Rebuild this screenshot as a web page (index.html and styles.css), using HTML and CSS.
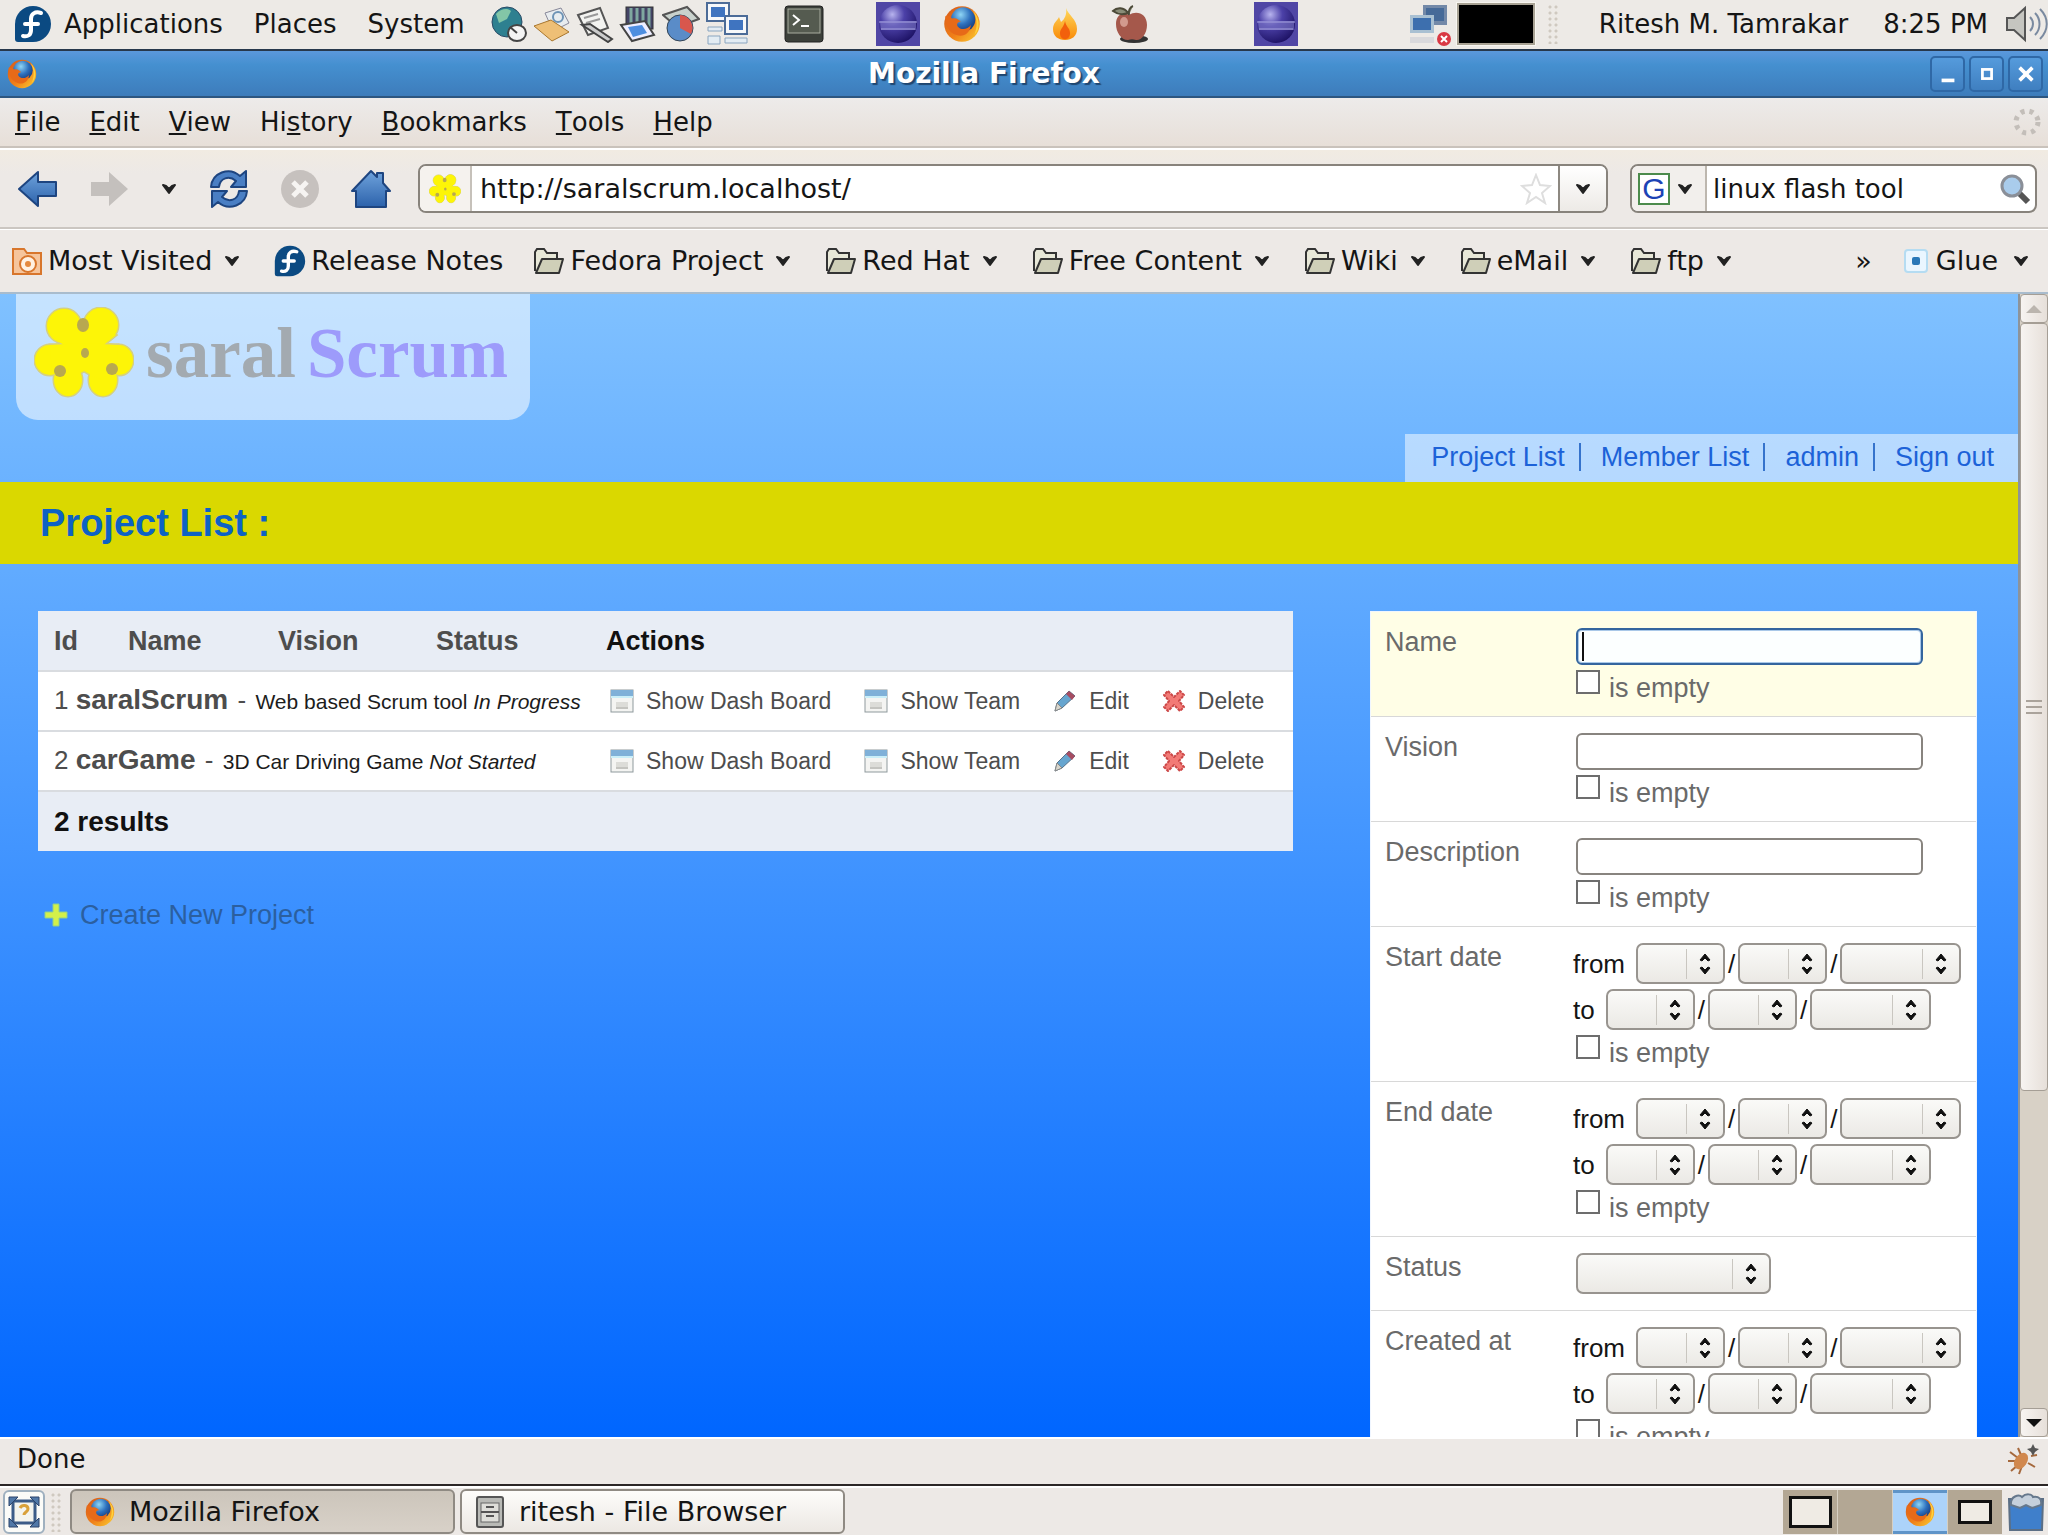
FILE: index.html
```
<!DOCTYPE html>
<html lang="en">
<head>
<meta charset="utf-8">
<title>Mozilla Firefox</title>
<link rel="stylesheet" href="styles.css">
</head>
<body>
<svg class="defs" aria-hidden="true">
  <defs>
    <linearGradient id="g-blue" x1="0" y1="0" x2="0" y2="1"><stop offset="0" stop-color="#6fa3dc"/><stop offset="1" stop-color="#2c62ab"/></linearGradient>
    <radialGradient id="g-globe" cx=".4" cy=".3" r=".8"><stop offset="0" stop-color="#8fd6f5"/><stop offset=".5" stop-color="#2d70bd"/><stop offset="1" stop-color="#12306d"/></radialGradient>
    <linearGradient id="g-fox" x1="0" y1="0" x2="1" y2="1"><stop offset="0" stop-color="#d5581a"/><stop offset=".55" stop-color="#f08019"/><stop offset="1" stop-color="#fbd032"/></linearGradient>
    <radialGradient id="g-ecl" cx=".35" cy=".25" r=".8"><stop offset="0" stop-color="#b7b3ee"/><stop offset=".4" stop-color="#4c41a8"/><stop offset="1" stop-color="#1c1163"/></radialGradient>
    <linearGradient id="g-flame" x1="0" y1="0" x2="0" y2="1"><stop offset="0" stop-color="#ffd95c"/><stop offset="1" stop-color="#f98a08"/></linearGradient>
    <g id="petals"><ellipse cx="30" cy="19" rx="17" ry="17"/><ellipse cx="67" cy="18" rx="17" ry="17"/><path d="M17 29l17-15h30l18 14-16 13-16 6-16-6z"/><ellipse cx="16" cy="53" rx="15" ry="15"/><ellipse cx="85" cy="53" rx="14" ry="15"/><ellipse cx="34" cy="73" rx="14" ry="16"/><ellipse cx="69" cy="73" rx="14" ry="16"/><path d="M16 38l34-2 34 2-2 28-18 6-14-8-14 8-18-6z"/></g>
    <symbol id="i-fedora" viewBox="0 0 38 38"><path d="M19 1a18 18 0 1 1 0 36H4a3 3 0 0 1-3-3V19A18 18 0 0 1 19 1z" fill="#0b4a82"/><path d="M27 8c-6-2-10 1-10 6v11c0 5-3 7-8 6M11 19h13" fill="none" stroke="#fff" stroke-width="4" stroke-linecap="round"/></symbol>
    <symbol id="i-firefox" viewBox="0 0 36 36"><circle cx="18" cy="18" r="16" fill="url(#g-fox)"/><circle cx="19" cy="14" r="11" fill="url(#g-globe)"/><path d="M3 11c2-1 4 0 6 2 4-1 6 1 8 3-3 0-4 2-3 4 3 4 9 3 12-1-1 8-7 11-13 9C6 26 3 19 3 11z" fill="#e76a18"/><path d="M28 6c6 6 7 16 1 22 3-7 3-14-1-22z" fill="#ffd23c"/></symbol>
    <symbol id="i-eclipse" viewBox="0 0 44 44"><rect width="44" height="44" fill="#5046a5"/><circle cx="22" cy="22" r="19" fill="url(#g-ecl)"/><path d="M4 19h36v9H5z" fill="#7d78c8" opacity=".6"/><path d="M3 20h38M5 27h34" stroke="#a5a1de" stroke-width="1"/></symbol>
    <symbol id="i-chev" viewBox="0 0 18 12"><path d="M3 2l6 8 6-8-3 1-3 3-3-3z" fill="#222" stroke="#222" stroke-width="2" stroke-linejoin="round"/></symbol>
    <symbol id="i-folder" viewBox="0 0 32 28"><path d="M2 24V5l2-3h7l3 4h10v5" fill="#e8e8d8" stroke="#333" stroke-width="2"/><path d="M3 26l6-14h21l-4 14z" fill="#cfcfb8" stroke="#333" stroke-width="2" stroke-linejoin="round"/></symbol>
    <symbol id="i-updown" viewBox="0 0 14 24"><path d="M2 8l5-6 5 6-2 1-3-3-3 3zM2 16l5 6 5-6-2-1-3 3-3-3z" fill="#111" stroke="#111" stroke-width="1"/></symbol>
    <symbol id="i-list" viewBox="0 0 24 24"><rect x="1" y="1" width="22" height="22" fill="#f4f4f2" stroke="#8f9a9d"/><rect x="1" y="1" width="22" height="6" fill="#7fb0d8"/><path d="M1 8h22" stroke="#c9eef8" stroke-width="2"/><path d="M6 13h12v6H6z" fill="#dcdcd8"/><path d="M6 19h12" stroke="#c4c4c0" stroke-width="2"/></symbol>
    <symbol id="i-pencil" viewBox="0 0 24 24"><path d="M2 22l2-8L16 2l6 5L9 19z" fill="#66a5cf" stroke="#57738a"/><path d="M16 2l6 5-3 4-6-6z" fill="#a64d62"/><path d="M2 22l2-8 5 5z" fill="#d8d6cc" stroke="#888"/></symbol>
    <symbol id="i-x" viewBox="0 0 24 24"><path d="M6 2l6 6 6-6 4 4-5 6 5 6-4 4-6-6-6 6-4-4 5-6-5-6z" fill="#f27a76" stroke="#cc4848" stroke-width="2" stroke-linejoin="round" stroke-dasharray="3 1"/></symbol>
    <symbol id="i-flower" viewBox="0 0 100 92"><use href="#petals" fill="#d5d080" stroke="#d5d080" stroke-width="3"/><use href="#petals" fill="#fdf507"/><g fill="#b8a850"><ellipse cx="49" cy="18" rx="6" ry="7"/><ellipse cx="51" cy="46" rx="4" ry="5"/><ellipse cx="26" cy="64" rx="6" ry="6"/><ellipse cx="78" cy="62" rx="6" ry="6"/></g></symbol>
  </defs>
</svg>

<header class="panel">
  <nav class="panel-menus">
    <svg class="ic38"><use href="#i-fedora"/></svg>
    <button>Applications</button><button>Places</button><button>System</button>
  </nav>
  <div class="launchers">
    <svg class="ic38" viewBox="0 0 38 38"><circle cx="17" cy="17" r="15" fill="#2e8090" stroke="#2b4a66"/><path d="M6 9c5-6 12-6 15-3l-4 8-8 4z" fill="#83c6a7"/><ellipse cx="27" cy="28" rx="9" ry="8" fill="#f4f4f4" stroke="#444" stroke-width="2"/><path d="M20 22l7 6" stroke="#444" stroke-width="2"/></svg>
    <svg class="ic38" viewBox="0 0 38 38"><path d="M12 8l16-5 8 15-16 8z" fill="#e8ecef" stroke="#889"/><circle cx="25" cy="12" r="5" fill="none" stroke="#6e93b5" stroke-width="2"/><path d="M1 21l17-6 18 12-17 9z" fill="#eebf76" stroke="#a9772e"/></svg>
    <svg class="ic38" viewBox="0 0 38 38"><path d="M2 10l22-7 8 20-20 7z" fill="#f3f3f0" stroke="#555" stroke-width="2"/><path d="M8 13l14-4M10 18l14-4" stroke="#999" stroke-width="2"/><path d="M6 20l8-1 22 15-4 3z" fill="#ccc" stroke="#444" stroke-width="2"/></svg>
    <svg class="ic38" viewBox="0 0 38 38"><rect x="7" y="2" width="27" height="22" fill="#446" stroke="#333"/><path d="M12 3v20M18 3v20M24 3v20M30 3v20" stroke="#7fa8a0" stroke-width="3"/><path d="M2 20l24-4 9 14-22 6z" fill="#eef" stroke="#444" stroke-width="2"/><path d="M9 22l14-2 5 8-14 4z" fill="#4e8ee0"/></svg>
    <svg class="ic38" viewBox="0 0 38 38"><path d="M1 10l24-8 12 12-22 8z" fill="#c9d2cd" stroke="#555" stroke-width="2"/><circle cx="18" cy="23" r="13" fill="#5a8cc8" stroke="#345"/><path d="M18 23V10a13 13 0 0 1 11 19z" fill="#d8574d"/></svg>
    <svg class="ic44" viewBox="0 0 44 44"><g fill="#f6f8fa" stroke="#4c6c98" stroke-width="2"><rect x="2" y="1" width="22" height="18"/><rect x="20" y="14" width="22" height="18"/></g><path d="M6 5h14v10H6zM24 18h14v10H24z" fill="#3f74c0"/><path d="M3 25h14v4H3zM20 36h22v5H20zM3 34h12v8H3z" fill="#e3ecf3" stroke="#8aa5bf"/></svg>
  </div>
  <div class="launchers apps">
    <svg class="ic40" viewBox="0 0 40 40"><rect x="1" y="2" width="38" height="36" rx="3" fill="#3c403a" stroke="#222"/><rect x="4" y="5" width="32" height="24" fill="#555b50" stroke="#a9ad9f"/><path d="M9 11l6 5-6 5M17 22h8" fill="none" stroke="#fff" stroke-width="2"/></svg>
    <svg class="ic44"><use href="#i-eclipse"/></svg>
    <svg class="ic40"><use href="#i-firefox"/></svg>
    <svg class="ic30 flame" viewBox="0 0 30 34"><path d="M16 1c2 7 11 11 11 21 0 7-5 11-12 11S3 29 3 22c0-6 4-8 6-12l2 5c4-3 6-8 5-14z" fill="url(#g-flame)"/><path d="M15 14c1 6 5 7 5 12 0 4-2 6-5 6s-5-2-5-6c0-4 4-6 5-12z" fill="#f2600c"/></svg>
    <svg class="ic40 apple" viewBox="0 0 40 40"><ellipse cx="24" cy="35" rx="14" ry="4" fill="#333"/><path d="M19 11c8-5 18-1 18 10 0 9-6 16-11 15-3-1-5-1-8 0C11 36 6 28 6 20c0-9 7-13 13-9z" fill="#a5584b"/><path d="M19 11c-1-4 1-8 4-9M18 9C14 3 7 3 3 7c4 3 10 4 15 2z" stroke="#4c4a38" stroke-width="2" fill="#8a8d78"/><ellipse cx="14" cy="18" rx="4" ry="5" fill="#d29a8e"/></svg>
    <svg class="ic44 eclipse2"><use href="#i-eclipse"/></svg>
  </div>
  <div class="tray">
    <svg class="ic44" viewBox="0 0 44 44"><path d="M16 3h24v20H16z" fill="#7389a8"/><path d="M19 6h18v13H19z" fill="#466a98"/><path d="M3 13h24v18H3z" fill="#a9c0d2"/><path d="M6 16h18v12H6z" fill="#3d6fae"/><path d="M3 35h24v6H3z" fill="#d9d9dc"/><circle cx="37" cy="37" r="7" fill="#d93843"/><path d="M34 34l6 6m0-6l-6 6" stroke="#fff" stroke-width="2"/></svg>
    <div class="monitor"></div>
    <div class="grip"></div>
    <button class="user">Ritesh M. Tamrakar</button>
    <button class="clock">8:25 PM</button>
    <svg class="ic44" viewBox="0 0 44 44"><path d="M3 16h7l11-10v32L10 28H3z" fill="#c5c5c0" stroke="#555" stroke-width="2"/><path d="M26 15c4 4 4 10 0 14M31 11c6 6 6 16 0 22M36 7c9 9 9 21 0 30" fill="none" stroke="#7a8aa0" stroke-width="2"/></svg>
  </div>
</header>

<div class="titlebar">
  <svg class="ic32"><use href="#i-firefox"/></svg>
  <h1>Mozilla Firefox</h1>
  <div class="win-buttons">
    <button aria-label="Minimize"><svg viewBox="0 0 24 24"><path d="M5 17h14v4H5z" fill="#fff"/></svg></button>
    <button aria-label="Maximize"><svg viewBox="0 0 24 24"><rect x="7" y="7" width="10" height="10" fill="none" stroke="#fff" stroke-width="3"/></svg></button>
    <button aria-label="Close"><svg viewBox="0 0 24 24"><path d="M5 5l14 14M19 5L5 19" stroke="#fff" stroke-width="4"/></svg></button>
  </div>
</div>

<nav class="menubar">
  <button><u>F</u>ile</button><button><u>E</u>dit</button><button><u>V</u>iew</button><button>Hi<u>s</u>tory</button><button><u>B</u>ookmarks</button><button><u>T</u>ools</button><button><u>H</u>elp</button>
  <svg class="ic30 throbber" viewBox="0 0 30 30"><circle cx="15" cy="15" r="11" fill="none" stroke="#c3beb9" stroke-width="5" stroke-dasharray="4 5"/></svg>
</nav>

<div class="toolbar">
  <div class="nav-buttons">
    <button aria-label="Back"><svg class="ic40" viewBox="0 0 40 40"><path d="M1 20L20 3v10h18v14H20v10z" fill="url(#g-blue)" stroke="#1e4580" stroke-width="2" stroke-linejoin="round"/></svg></button>
    <button aria-label="Forward"><svg class="ic40" viewBox="0 0 40 40"><path d="M39 20L20 3v10H2v14h18v10z" fill="#c4c0bd"/></svg></button>
    <button aria-label="History"><svg class="chev"><use href="#i-chev"/></svg></button>
    <button aria-label="Reload"><svg class="ic40" viewBox="0 0 40 40"><g fill="#4a7fc4" stroke="#1e4580" stroke-width="2" stroke-linejoin="round"><path d="M2 18C3 4 20-3 31 7l6-5v16H22l5-6c-7-6-16-3-17 6z"/><path d="M38 22c-1 14-18 21-29 11l-6 5V22h15l-5 6c7 6 16 3 17-6z"/></g></svg></button>
    <button aria-label="Stop"><svg class="ic40" viewBox="0 0 40 40"><circle cx="20" cy="20" r="19" fill="#c6c1be"/><path d="M13 13l14 14M27 13L13 27" stroke="#f6f4f2" stroke-width="5"/></svg></button>
    <button aria-label="Home"><svg class="ic40" viewBox="0 0 40 40"><path d="M20 2l6 6V4h6v10l7 8h-4v16H5V22H1z" fill="url(#g-blue)" stroke="#1e4580" stroke-width="2" stroke-linejoin="round"/></svg></button>
  </div>
  <div class="url-box">
    <div class="favicon"><svg class="ic32"><use href="#i-flower"/></svg></div>
    <input type="text" aria-label="Location" value="http://saralscrum.localhost/">
    <svg class="ic32 star" viewBox="0 0 32 32"><path d="M16 2l4 10 10 1-8 7 3 10-9-6-9 6 3-10-8-7 10-1z" fill="#fff" stroke="#dedede" stroke-width="2"/></svg>
    <button class="drop" aria-label="Show history"><svg class="chev"><use href="#i-chev"/></svg></button>
  </div>
  <div class="search-box">
    <button class="engine" aria-label="Search engine"><span class="google">G</span><svg class="chev"><use href="#i-chev"/></svg></button>
    <input type="text" aria-label="Search" value="linux flash tool">
    <svg class="ic32 lens" viewBox="0 0 32 32"><path d="M19 19l10 10" stroke="#555" stroke-width="6"/><circle cx="13" cy="13" r="10" fill="#a9ccec" stroke="#8a8f98" stroke-width="3"/></svg>
  </div>
</div>

<nav class="bookmarks">
  <button><svg class="ic32" viewBox="0 0 32 32"><path d="M2 29V4h11l3 4h14v21z" fill="#f6c59c" stroke="#d8762c" stroke-width="2"/><circle cx="17" cy="19" r="8" fill="#fff1e2" stroke="#d8762c" stroke-width="2"/><circle cx="17" cy="19" r="3" fill="#e58a3e"/></svg>Most Visited<svg class="chev"><use href="#i-chev"/></svg></button>
  <button class="plain"><svg class="ic32"><use href="#i-fedora"/></svg>Release Notes</button>
  <button><svg class="ic32"><use href="#i-folder"/></svg>Fedora Project<svg class="chev"><use href="#i-chev"/></svg></button>
  <button><svg class="ic32"><use href="#i-folder"/></svg>Red Hat<svg class="chev"><use href="#i-chev"/></svg></button>
  <button><svg class="ic32"><use href="#i-folder"/></svg>Free Content<svg class="chev"><use href="#i-chev"/></svg></button>
  <button><svg class="ic32"><use href="#i-folder"/></svg>Wiki<svg class="chev"><use href="#i-chev"/></svg></button>
  <button><svg class="ic32"><use href="#i-folder"/></svg>eMail<svg class="chev"><use href="#i-chev"/></svg></button>
  <button><svg class="ic32"><use href="#i-folder"/></svg>ftp<svg class="chev"><use href="#i-chev"/></svg></button>
  <div class="overflow">
    <button>»</button>
    <button><svg class="ic24" viewBox="0 0 24 24"><rect x="1" y="1" width="22" height="22" rx="3" fill="#eaf6ff" stroke="#b5dcf2" stroke-width="2"/><rect x="8" y="8" width="8" height="8" rx="2" fill="#2a78b8"/></svg>Glue<svg class="chev"><use href="#i-chev"/></svg></button>
  </div>
</nav>

<div class="viewport">
  <div class="page">
    <div class="logo"><svg><use href="#i-flower"/></svg><span class="saral">saral</span><span class="scrum">Scrum</span></div>
    <nav class="site-nav"><a href="#">Project List</a><a href="#">Member List</a><a href="#">admin</a><a href="#">Sign out</a></nav>
    <h2>Project List :</h2>
    <main>
      <section>
        <table class="projects">
          <thead><tr><th class="c-id"><a href="#">Id</a></th><th class="c-name"><a href="#">Name</a></th><th class="c-vision"><a href="#">Vision</a></th><th class="c-status"><a href="#">Status</a></th><th>Actions</th></tr></thead>
          <tbody>
            <tr><td colspan="4"><a href="#">1</a> <a href="#"><b>saralScrum</b></a> <span class="dash">-</span> <span class="desc">Web based Scrum tool <em>In Progress</em></span></td>
              <td><div class="actions"><a href="#"><svg class="ic24"><use href="#i-list"/></svg>Show Dash Board</a><a href="#"><svg class="ic24"><use href="#i-list"/></svg>Show Team</a><a href="#"><svg class="ic24"><use href="#i-pencil"/></svg>Edit</a><a href="#"><svg class="ic24"><use href="#i-x"/></svg>Delete</a></div></td></tr>
            <tr><td colspan="4"><a href="#">2</a> <a href="#"><b>carGame</b></a> <span class="dash">-</span> <span class="desc">3D Car Driving Game <em>Not Started</em></span></td>
              <td><div class="actions"><a href="#"><svg class="ic24"><use href="#i-list"/></svg>Show Dash Board</a><a href="#"><svg class="ic24"><use href="#i-list"/></svg>Show Team</a><a href="#"><svg class="ic24"><use href="#i-pencil"/></svg>Edit</a><a href="#"><svg class="ic24"><use href="#i-x"/></svg>Delete</a></div></td></tr>
          </tbody>
          <tfoot><tr><th colspan="5">2 results</th></tr></tfoot>
        </table>
        <a class="create" href="#"><svg class="ic24" viewBox="0 0 24 24"><path d="M9 1h6v8h8v6h-8v8H9v-8H1V9h8z" fill="#d3f04a" stroke="#8fd08a"/></svg>Create New Project</a>
      </section>
      <form class="filters">
        <div class="row active"><label for="name">Name</label><div class="field"><input class="text" id="name" type="text"><div class="check"><input type="checkbox" id="e1"><label for="e1">is empty</label></div></div></div>
        <div class="row"><label for="vision">Vision</label><div class="field"><input class="text" id="vision" type="text"><div class="check"><input type="checkbox" id="e2"><label for="e2">is empty</label></div></div></div>
        <div class="row"><label for="description">Description</label><div class="field"><input class="text" id="description" type="text"><div class="check"><input type="checkbox" id="e3"><label for="e3">is empty</label></div></div></div>
        <div class="row"><label for="start">Start date</label><div class="field">
          <div class="date"><span class="word">from</span><span class="sel"><select id="start" aria-label="Start from month"></select><svg><use href="#i-updown"/></svg></span>/<span class="sel"><select aria-label="Start from day"></select><svg><use href="#i-updown"/></svg></span>/<span class="sel year"><select aria-label="Start from year"></select><svg><use href="#i-updown"/></svg></span></div>
          <div class="date"><span class="word">to</span><span class="sel"><select aria-label="Start to month"></select><svg><use href="#i-updown"/></svg></span>/<span class="sel"><select aria-label="Start to day"></select><svg><use href="#i-updown"/></svg></span>/<span class="sel year"><select aria-label="Start to year"></select><svg><use href="#i-updown"/></svg></span></div>
          <div class="check"><input type="checkbox" id="e4"><label for="e4">is empty</label></div></div></div>
        <div class="row"><label for="end">End date</label><div class="field">
          <div class="date"><span class="word">from</span><span class="sel"><select id="end" aria-label="End from month"></select><svg><use href="#i-updown"/></svg></span>/<span class="sel"><select aria-label="End from day"></select><svg><use href="#i-updown"/></svg></span>/<span class="sel year"><select aria-label="End from year"></select><svg><use href="#i-updown"/></svg></span></div>
          <div class="date"><span class="word">to</span><span class="sel"><select aria-label="End to month"></select><svg><use href="#i-updown"/></svg></span>/<span class="sel"><select aria-label="End to day"></select><svg><use href="#i-updown"/></svg></span>/<span class="sel year"><select aria-label="End to year"></select><svg><use href="#i-updown"/></svg></span></div>
          <div class="check"><input type="checkbox" id="e5"><label for="e5">is empty</label></div></div></div>
        <div class="row"><label for="status">Status</label><div class="field"><span class="sel status"><select id="status"></select><svg><use href="#i-updown"/></svg></span></div></div>
        <div class="row"><label for="created">Created at</label><div class="field">
          <div class="date"><span class="word">from</span><span class="sel"><select id="created" aria-label="Created from month"></select><svg><use href="#i-updown"/></svg></span>/<span class="sel"><select aria-label="Created from day"></select><svg><use href="#i-updown"/></svg></span>/<span class="sel year"><select aria-label="Created from year"></select><svg><use href="#i-updown"/></svg></span></div>
          <div class="date"><span class="word">to</span><span class="sel"><select aria-label="Created to month"></select><svg><use href="#i-updown"/></svg></span>/<span class="sel"><select aria-label="Created to day"></select><svg><use href="#i-updown"/></svg></span>/<span class="sel year"><select aria-label="Created to year"></select><svg><use href="#i-updown"/></svg></span></div>
          <div class="check"><input type="checkbox" id="e6"><label for="e6">is empty</label></div></div></div>
      </form>
    </main>
  </div>
  <div class="scrollbar">
    <button aria-label="Scroll up"><svg viewBox="0 0 16 10"><path d="M0 9l8-8 8 8z" fill="#bbb5ae"/></svg></button>
    <div class="thumb"><svg viewBox="0 0 16 16"><path d="M0 2h16M0 8h16M0 14h16" stroke="#aaa39b" stroke-width="2"/></svg></div>
    <div class="track"></div>
    <button aria-label="Scroll down"><svg viewBox="0 0 16 10"><path d="M0 1l8 8 8-8z" fill="#111"/></svg></button>
  </div>
</div>

<div class="statusbar"><span>Done</span>
  <svg class="ic32" viewBox="0 0 32 32"><path d="M3 9l8 6M1 18h9M4 28l7-6M11 5l3 7M12 31l3-8M24 13l6-1M21 20l7 4" stroke="#a5683c" stroke-width="2"/><ellipse cx="14" cy="18" rx="6" ry="9" transform="rotate(35 14 18)" fill="#d1884e"/><path d="M26 1l2 4 4 1-4 3-2 4-2-4-4-3 4-1z" fill="#555"/></svg>
</div>

<footer class="taskbar">
  <button class="show-desktop" aria-label="Show desktop"><svg class="ic32" viewBox="0 0 32 32"><rect x="5" y="5" width="22" height="22" fill="#f4f4ee" stroke="#3c5c88" stroke-width="3"/><path d="M1 1h9l-9 9zM31 1h-9l9 9zM1 31h9l-9-9zM31 31h-9l9-9z" fill="#5078a8" stroke="#2c456c"/><path d="M12 12c2-4 8-3 8 1 0 3-4 3-4 6" fill="none" stroke="#d9a13a" stroke-width="3"/></svg></button>
  <div class="grip"></div>
  <button class="task current"><svg class="ic32"><use href="#i-firefox"/></svg>Mozilla Firefox</button>
  <button class="task"><svg class="ic32" viewBox="0 0 32 32"><rect x="3" y="1" width="26" height="30" rx="2" fill="#b9bab6" stroke="#555" stroke-width="2"/><rect x="7" y="7" width="18" height="19" fill="#deded9" stroke="#666"/><path d="M7 16h18M12 11h8M12 20h8" stroke="#555" stroke-width="2"/></svg>ritesh - File Browser</button>
  <div class="pager"><button aria-label="Workspace 1"><i class="win"></i></button><button aria-label="Workspace 2"></button><button class="on" aria-label="Workspace 3"><svg class="ic32"><use href="#i-firefox"/></svg></button><button aria-label="Workspace 4"><i class="win small"></i></button></div>
  <svg class="ic38" viewBox="0 0 38 38"><path d="M2 6h34l-1 31H3z" fill="#3f7fcb" stroke="#5c6f85" stroke-width="2"/><path d="M4 12C3 3 12 1 15 4c4-4 10-3 11 0 6-1 9 2 8 8l-9 3-6-3-6 3z" fill="#c5d0dc" stroke="#66788c" stroke-width="2"/></svg>
</footer>
</body>
</html>
```
FILE: styles.css
```
* { box-sizing: border-box; }
body {
  margin: 0;
  height: 100vh;
  display: flex;
  flex-direction: column;
  overflow: hidden;
  background: #ede9e6;
  font: 26px/32px "DejaVu Sans", sans-serif;
  color: #151515;
}
button, input, select { font: inherit; color: inherit; }
button { padding: 0; border: 0; background: none; white-space: nowrap; display: flex; align-items: center; }
input { min-width: 0; outline: 0; }
svg { flex: none; display: block; }
.defs { position: absolute; width: 0; height: 0; }
.ic24 { width: 24px; height: 24px; }
.ic30 { width: 30px; height: 34px; }
.ic32 { width: 32px; height: 32px; }
.ic38 { width: 38px; height: 38px; }
.ic40 { width: 40px; height: 40px; }
.ic44 { width: 44px; height: 44px; }
.chev { width: 18px; height: 12px; }

/* desktop panel */
.panel { flex: none; height: 51px; display: flex; align-items: center; padding-left: 14px; border-bottom: 2px solid #27384c; padding-bottom: 2px; background: #edeae6; }
.panel-menus { display: flex; align-items: center; gap: 31px; }
.panel-menus svg { margin-right: -19px; }
.launchers { display: flex; align-items: center; gap: 5px; margin-left: 26px; }
.apps { margin-left: 35px; gap: 0; }
.apps .ic44 { margin-left: 52px; }
.apps .ic40 + .ic44 + .ic40 { margin-left: 22px; }
.apps .flame { margin-left: 68px; }
.apps .apple { margin-left: 30px; }
.apps .eclipse2 { margin-left: 104px; }
.tray { display: flex; align-items: center; margin-left: auto; }
.monitor { width: 78px; height: 42px; margin-left: 6px; background: #000; border: 2px solid #a8a294; outline: 1px solid #f8f6f0; }
.grip { width: 12px; height: 40px; background: radial-gradient(#cfc9c0 1px, transparent 2px) 0 0 / 6px 6px; }
.tray .grip { margin-left: 12px; }
.user { margin-left: 40px; }
.clock { margin: 0 16px 0 35px; }

/* window frame */
.titlebar { flex: none; height: 47px; display: flex; align-items: center; padding: 0 5px 0 6px; background: linear-gradient(#5b98dc, #4590d0 30%, #3d7cbb); border-bottom: 2px solid #2d5680; }
.titlebar h1 { flex: 1; margin: 0; text-align: center; font-size: 28px; color: #fff; text-shadow: 2px 2px 1px #1f4670; }
.win-buttons { display: flex; gap: 4px; }
.win-buttons button { width: 35px; height: 36px; justify-content: center; border: 2px solid #2f68a6; border-radius: 5px; background: linear-gradient(#559bdc, #3f7fc0); }
.win-buttons svg { width: 22px; height: 22px; }

.menubar { flex: none; height: 50px; display: flex; align-items: center; gap: 29px; padding: 0 6px 0 15px; background: linear-gradient(#edebea, #e7dfd8); border-bottom: 2px solid #c9c2bb; }
.throbber { margin-left: auto; }

.toolbar { flex: none; height: 81px; display: flex; align-items: center; padding: 0 11px 0 18px; background: linear-gradient(#f1ebe2, #ede9e6 30%); border-bottom: 2px solid #cbc6c1; border-top: 2px solid #fff; }
.nav-buttons { display: flex; gap: 31px; margin-right: 27px; }
.nav-buttons button { height: 40px; }
.url-box, .search-box { display: flex; align-items: center; height: 49px; border: 2px solid #88837c; border-radius: 8px; background: #fff; overflow: hidden; }
.url-box { flex: 1; }
.url-box input, .search-box input { flex: 1; border: 0; background: none; padding: 0 6px; }
.url-box input { font-size: 27px; padding-left: 8px; }
.favicon { width: 52px; height: 100%; display: grid; place-items: center; background: #f5f2ee; border-right: 2px solid #c6c1ba; }
.star { margin-right: 6px; }
.drop { width: 48px; height: 100%; justify-content: center; border-left: 2px solid #8d8881; background: linear-gradient(#fff, #edeae6); }
.search-box { width: 407px; margin-left: 22px; }
.engine { height: 100%; gap: 6px; padding: 0 11px 0 6px; background: #f2efec; border-right: 2px solid #bdb7af; }
.google { width: 32px; height: 32px; font: 30px/28px "Liberation Sans", sans-serif; color: #1c43b5; border: 2px solid #4c8b4c; background: #fff; }
.lens { margin-right: 4px; }

.bookmarks { flex: none; height: 65px; display: flex; align-items: center; gap: 33px; padding: 0 18px 0 11px; border-top: 1px solid #fff; border-bottom: 2px solid #a9bccd; font-size: 27px; }
.bookmarks button { gap: 5px; }
.bookmarks .chev { margin-left: 6px; }
.bookmarks .plain { margin-right: -3px; }
.overflow { display: flex; gap: 32px; margin-left: auto; }
.overflow button { gap: 8px; }

/* web page */
.viewport { flex: 1; min-height: 0; display: flex; }
.page { flex: 1; min-width: 0; overflow: hidden; display: flex; flex-direction: column; background: linear-gradient(#80c1ff, #0066ff); font-family: "Liberation Sans", Arial, sans-serif; }
.page a { color: inherit; text-decoration: none; }
.logo { flex: none; align-self: flex-start; display: flex; align-items: center; width: 514px; height: 126px; margin-left: 16px; padding: 0 0 8px 18px; border-radius: 0 0 22px 22px; background: rgba(255, 255, 255, .55); font: bold 71px/80px "Liberation Serif", "Times New Roman", serif; }
.logo svg { width: 100px; height: 92px; }
.saral { margin-left: 12px; color: #a3aab0; }
.scrum { margin-left: 11px; color: #9d9bfb; }
.site-nav { flex: none; align-self: flex-end; display: flex; align-items: center; height: 48px; margin-top: 14px; padding: 0 24px 2px 26px; background: rgba(255, 255, 255, .5); font-size: 27px; line-height: 28px; color: #1c62d8; }
.site-nav a + a { margin-left: 14px; padding-left: 20px; border-left: 2px solid #3573cc; }
h2 { flex: none; margin: 0; padding: 0 40px; font-size: 38px; line-height: 82px; background: #dad800; color: #0d62c4; }
main { display: grid; grid-template-columns: minmax(0, 1fr) 607px; gap: 77px; align-items: start; padding: 47px 41px 0 38px; }
.projects { width: 100%; border-collapse: collapse; background: #fff; font-size: 26px; color: #4d4d4d; table-layout: fixed; }
.projects th, .projects td { height: 60px; padding: 0 0 0 16px; text-align: left; white-space: nowrap; border-bottom: 2px solid #d9dce0; }
.projects thead, .projects tfoot { background: #e8edf5; }
.projects th { font-size: 27px; }
.projects tfoot th, .projects th:last-child { color: #111; }
.projects tfoot th { border-bottom: 0; font-size: 28px; }
.c-id { width: 74px; }
.c-name { width: 150px; }
.c-vision { width: 158px; }
.c-status { width: 170px; }
.projects b { font-size: 28px; }
.dash { margin: 0 2px; }
.desc { font-size: 21px; color: #1c1c1c; }
.actions { display: flex; gap: 33px; padding-left: 4px; font-size: 23px; }
.actions a { display: flex; align-items: center; gap: 12px; }
.create { display: flex; align-items: center; gap: 12px; margin: 48px 0 0 6px; font-size: 27px; }
.page .create { color: #2b5f9f; }

.filters { background: #fff; border: 1px solid #f0f6ff; font-size: 27px; line-height: 28px; color: #6a6a6a; }
.row { display: grid; grid-template-columns: 188px 1fr; padding: 16px 0 16px 14px; border-bottom: 1px solid #d8d8d8; }
.active { background: #fffee6; }
.field { display: flex; flex-direction: column; gap: 5px; }
.text { width: 347px; height: 37px; margin-left: 3px; padding: 0 8px; border: 2px solid #88847f; border-radius: 6px; background: #fff; }
.active .text { border-color: #34659e; background: linear-gradient(#111, #111) 4px 2px / 2px 29px no-repeat #fcffff; box-shadow: inset 0 0 0 1px #a9c8e8; }
.check { display: flex; gap: 9px; height: 30px; padding-left: 3px; }
.check input { appearance: none; width: 24px; height: 24px; margin: 0; border: 2px solid #6d6d6d; background: #fff; }
.check label { line-height: 24px; align-self: flex-end; }
.date { display: flex; align-items: center; gap: 3px; font-size: 26px; color: #151515; }
.word { margin-right: 8px; }
.sel { display: grid; width: 89px; height: 41px; }
.sel select { grid-area: 1 / 1; appearance: none; min-width: 0; width: 100%; height: 100%; border: 2px solid #98948f; border-radius: 7px; background: linear-gradient(#c9c6c0, #c9c6c0) right 36px center / 1px 30px no-repeat, linear-gradient(#fafaf8, #ebe9e5); }
.sel svg { grid-area: 1 / 1; justify-self: end; align-self: center; width: 14px; height: 24px; margin-right: 13px; pointer-events: none; }
.year { width: 121px; }
.status { width: 195px; margin-left: 3px; }

.scrollbar { flex: none; width: 30px; display: flex; flex-direction: column; background: #d8d1c6; border-left: 2px solid #8d9399; }
.scrollbar button, .thumb { display: grid; place-items: center; border: 1px solid #a59e95; border-radius: 4px; background: linear-gradient(90deg, #f7f4f1, #e6dfd9); }
.scrollbar button { height: 29px; }
.scrollbar svg { width: 16px; }
.scrollbar .thumb { flex: 768; }
.track { flex: 318; }

.statusbar { flex: none; height: 49px; display: flex; align-items: center; justify-content: space-between; padding: 0 9px 6px 17px; border-top: 2px solid #fff; border-bottom: 2px solid #2b2626; background: #ede9e6; }
.taskbar { flex: none; height: 49px; display: flex; align-items: center; padding: 0 3px; border-top: 2px solid #fff; background: #ede9e6; }
.show-desktop { width: 42px; height: 44px; justify-content: center; border: 2px solid #9fb0bf; border-radius: 6px; background: #fbfbf8; }
.taskbar .grip { margin: 0 8px 0 5px; }
.task { flex: 0 1 385px; height: 45px; gap: 13px; padding: 0 12px; margin-right: 5px; border: 2px solid #8f8a83; border-radius: 6px; background: linear-gradient(#fdfcfa, #ece8e3); font-size: 27px; }
.current { background: linear-gradient(#ccc5bb, #d8d1c8); }
.pager { display: flex; gap: 1px; margin: 0 5px 0 auto; height: 44px; background: #d6cfc2; }
.pager button { width: 54px; justify-content: center; background: #b3a794; }
.pager .on { background: #acd3fa; border: solid #5f94c8; border-width: 3px 0; }
.win { width: 43px; height: 32px; border: 3px solid #111; background: #efebe4; }
.small { width: 34px; height: 24px; }
```
